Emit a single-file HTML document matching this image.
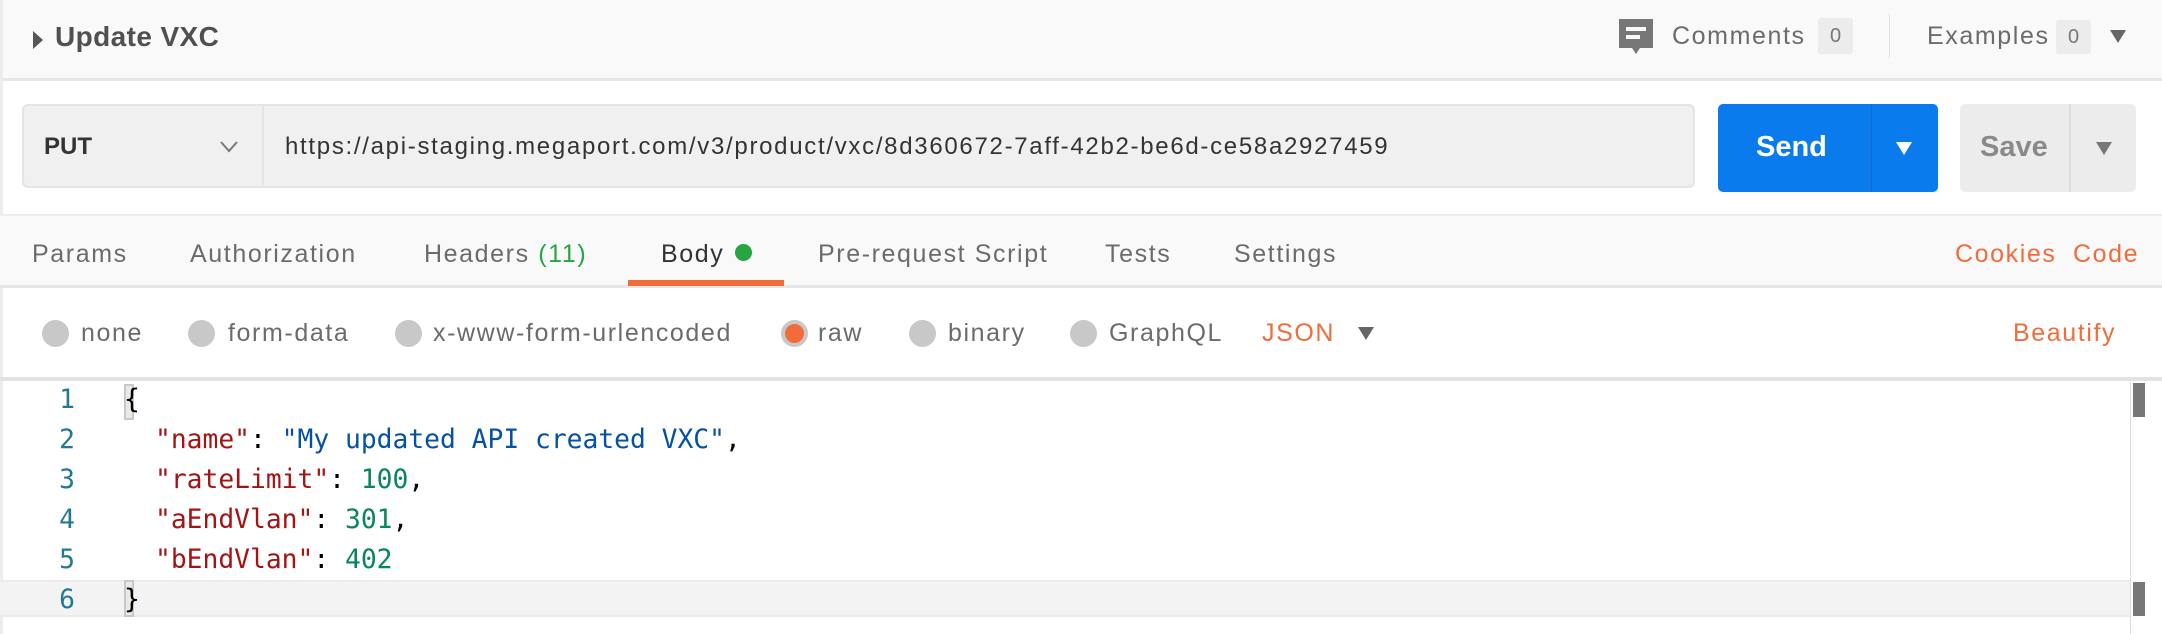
<!DOCTYPE html>
<html><head><meta charset="utf-8"><style>
*{margin:0;padding:0;box-sizing:border-box}
body{width:2162px;height:634px;background:#fff;font-family:"Liberation Sans",sans-serif;position:relative;overflow:hidden;color:#505050}
.a{position:absolute;white-space:nowrap}
.t{font-size:25px;letter-spacing:1.6px}
.radio{position:absolute;width:27px;height:27px;border-radius:50%;background:#c8c8c8;top:320px}
.mono{font-family:"DejaVu Sans Mono","Liberation Mono",monospace;font-size:26.3px}
.ln{position:absolute;left:52px;width:30px;text-align:center;color:#237893}
.k{color:#a31515}.s{color:#0451a5}.n{color:#098658}.p{color:#000}
</style></head><body>
<div class="a" style="left:0;top:0;width:2162px;height:81px;background:#f9f9f9;border-bottom:3px solid #e6e6e6"></div>
<div class="a" style="left:0;top:0;width:3px;height:634px;background:#ececec"></div>
<svg class="a" style="left:32px;top:30px" width="12" height="20"><path d="M1 1 L11 10 L1 19Z" fill="#555"/></svg>
<div class="a" style="left:55px;top:21px;font-size:28px;font-weight:bold;color:#505050;letter-spacing:0.4px">Update VXC</div>
<svg class="a" style="left:1617px;top:18px" width="38" height="38"><path d="M2 1H36V30H23L19 36L15 30H2Z" fill="#777"/><rect x="9" y="9" width="20" height="4" fill="#f9f9f9"/><rect x="9" y="17" width="14" height="4" fill="#f9f9f9"/></svg>
<div class="a t" style="left:1672px;top:22px;color:#6b6b6b">Comments</div>
<div class="a" style="left:1818px;top:18px;width:35px;height:36px;background:#ececec;border-radius:3px;font-size:20px;text-align:center;line-height:36px;color:#777">0</div>
<div class="a" style="left:1889px;top:14px;width:1px;height:44px;background:#e2e2e2"></div>
<div class="a t" style="left:1927px;top:22px;color:#6b6b6b">Examples</div>
<div class="a" style="left:2056px;top:20px;width:35px;height:34px;background:#ececec;border-radius:3px;font-size:20px;text-align:center;line-height:34px;color:#777">0</div>
<svg class="a" style="left:2110px;top:30px" width="16" height="14"><path d="M0 0H16L8 13Z" fill="#666"/></svg>

<div class="a" style="left:22px;top:104px;width:1673px;height:84px;background:#f0f0f0;border:2px solid #e4e4e4;border-radius:6px"></div>
<div class="a" style="left:262px;top:106px;width:2px;height:80px;background:#e4e4e4"></div>
<div class="a" style="left:44px;top:133px;font-size:24px;font-weight:bold;color:#333">PUT</div>
<svg class="a" style="left:220px;top:141px" width="18" height="12"><path d="M1 1L9 10L17 1" stroke="#777" stroke-width="2" fill="none"/></svg>
<div class="a" style="left:285px;top:133px;font-size:24px;letter-spacing:1.7px;color:#333">https://api-staging.megaport.com/v3/product/vxc/8d360672-7aff-42b2-be6d-ce58a2927459</div>
<div class="a" style="left:1718px;top:104px;width:220px;height:88px;background:#097bed;border-radius:5px"></div>
<div class="a" style="left:1871px;top:104px;width:1px;height:88px;background:#0a6cd0"></div>
<div class="a" style="left:1756px;top:131px;font-size:29px;font-weight:bold;color:#fff">Send</div>
<svg class="a" style="left:1896px;top:142px" width="16" height="14"><path d="M0 0H16L8 13Z" fill="#fff"/></svg>
<div class="a" style="left:1960px;top:104px;width:176px;height:88px;background:#ececec;border-radius:5px"></div>
<div class="a" style="left:2069px;top:104px;width:2px;height:88px;background:#dcdcdc"></div>
<div class="a" style="left:1980px;top:131px;font-size:29px;font-weight:bold;color:#8a8a8a">Save</div>
<svg class="a" style="left:2096px;top:142px" width="16" height="14"><path d="M0 0H16L8 13Z" fill="#777"/></svg>

<div class="a" style="left:0;top:214px;width:2162px;height:74px;background:#f9f9f9;border-top:2px solid #ececec;border-bottom:3px solid #e6e6e6"></div>
<div class="a t" style="left:32px;top:240px;color:#6b6b6b">Params</div>
<div class="a t" style="left:190px;top:240px;color:#6b6b6b">Authorization</div>
<div class="a t" style="left:424px;top:240px;color:#6b6b6b">Headers <span style="color:#26a541">(11)</span></div>
<div class="a t" style="left:661px;top:240px;color:#333">Body</div>
<div class="a" style="left:735px;top:244px;width:17px;height:17px;border-radius:50%;background:#26a541"></div>
<div class="a" style="left:628px;top:280px;width:156px;height:6px;background:#f26b3a"></div>
<div class="a t" style="left:818px;top:240px;color:#6b6b6b">Pre-request Script</div>
<div class="a t" style="left:1105px;top:240px;color:#6b6b6b">Tests</div>
<div class="a t" style="left:1234px;top:240px;color:#6b6b6b">Settings</div>
<div class="a t" style="left:1955px;top:240px;color:#f26b3a">Cookies</div>
<div class="a t" style="left:2073px;top:240px;color:#f26b3a">Code</div>

<div class="radio" style="left:42px"></div><div class="a t" style="left:81px;top:319px;color:#6b6b6b">none</div>
<div class="radio" style="left:188px"></div><div class="a t" style="left:228px;top:319px;color:#6b6b6b">form-data</div>
<div class="radio" style="left:395px"></div><div class="a t" style="left:433px;top:319px;color:#6b6b6b">x-www-form-urlencoded</div>
<div class="radio" style="left:781px;background:#f26b3a;border:4px solid #c8c8c8"></div><div class="a t" style="left:818px;top:319px;color:#6b6b6b">raw</div>
<div class="radio" style="left:909px"></div><div class="a t" style="left:948px;top:319px;color:#6b6b6b">binary</div>
<div class="radio" style="left:1070px"></div><div class="a t" style="left:1109px;top:319px;color:#6b6b6b">GraphQL</div>
<div class="a t" style="left:1262px;top:319px;color:#f26b3a">JSON</div>
<svg class="a" style="left:1358px;top:327px" width="16" height="14"><path d="M0 0H16L8 13Z" fill="#666"/></svg>
<div class="a t" style="left:2013px;top:319px;color:#f26b3a">Beautify</div>

<div class="a" style="left:0;top:377px;width:2162px;height:4px;background:#e2e2e2"></div>
<div class="a" style="left:0;top:580px;width:2130px;height:37px;background:#f3f3f3;border-top:2px solid #ebebeb;border-bottom:2px solid #ebebeb"></div>
<div class="a" style="left:124px;top:384px;width:10px;height:36px;background:#e6ebe3;border:2px solid #c8c8c8"></div>
<div class="a" style="left:124px;top:580px;width:10px;height:37px;background:#e6ebe3;border:2px solid #c8c8c8"></div>
<div class="a" style="left:2133px;top:383px;width:12px;height:34px;background:#777"></div>
<div class="a" style="left:2130px;top:383px;width:1px;height:251px;background:#ddd"></div>
<div class="a" style="left:2133px;top:582px;width:12px;height:34px;background:#777"></div>
<div class="mono">
<div class="ln" style="top:385px">1</div>
<div class="ln" style="top:425px">2</div>
<div class="ln" style="top:465px">3</div>
<div class="ln" style="top:505px">4</div>
<div class="ln" style="top:545px">5</div>
<div class="ln" style="top:585px">6</div>
<div class="a p" style="left:124px;top:385px">{</div>
<div class="a" style="left:155px;top:425px"><span class="k">"name"</span><span class="p">: </span><span class="s">"My updated API created VXC"</span><span class="p">,</span></div>
<div class="a" style="left:155px;top:465px"><span class="k">"rateLimit"</span><span class="p">: </span><span class="n">100</span><span class="p">,</span></div>
<div class="a" style="left:155px;top:505px"><span class="k">"aEndVlan"</span><span class="p">: </span><span class="n">301</span><span class="p">,</span></div>
<div class="a" style="left:155px;top:545px"><span class="k">"bEndVlan"</span><span class="p">: </span><span class="n">402</span></div>
<div class="a p" style="left:124px;top:585px">}</div>
</div>
</body></html>
